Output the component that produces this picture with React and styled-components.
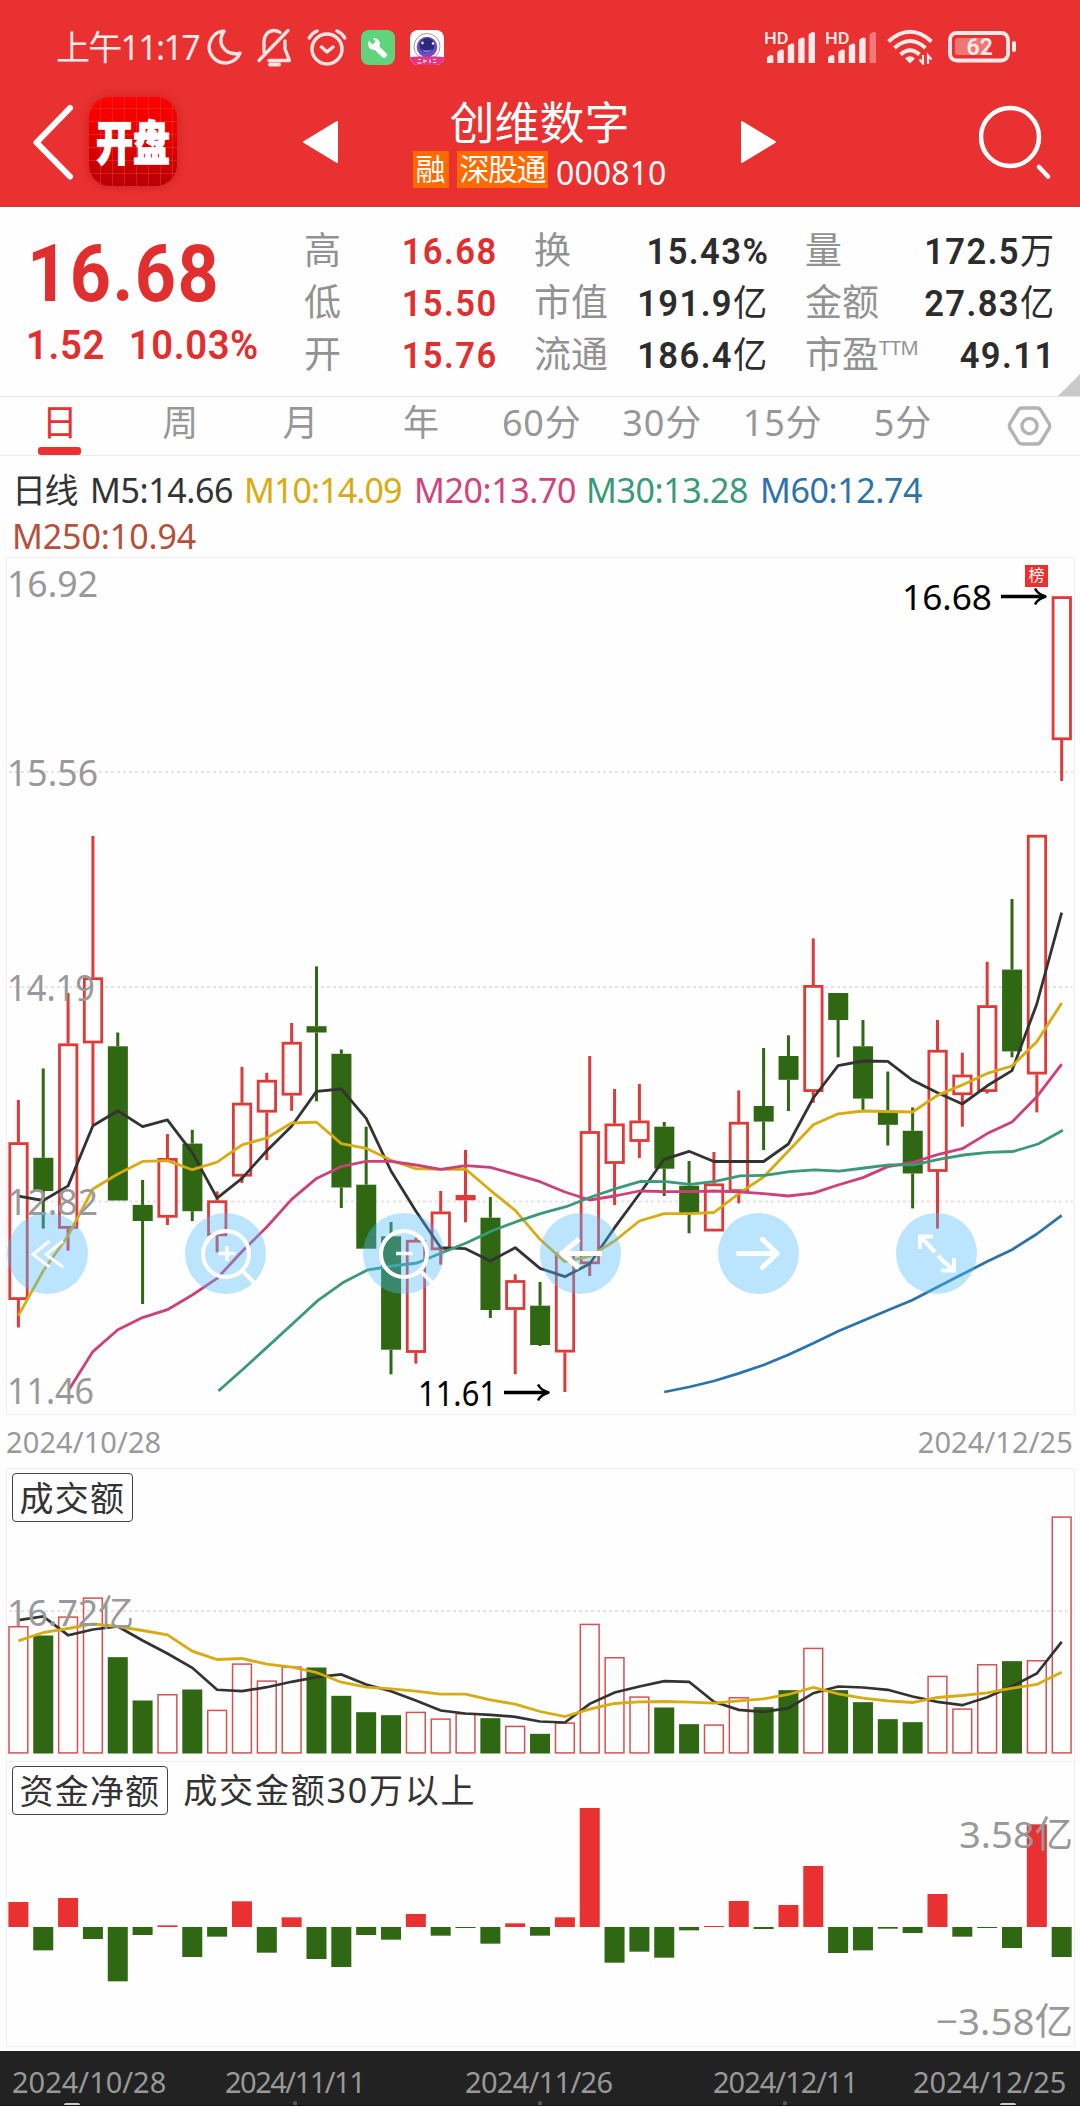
import React from 'react';
import styled, { createGlobalStyle } from 'styled-components';

const RED = '#e83130';
const UP = '#df3a3a';
const DOWN = '#2f6712';
const SANS = '"Noto Sans", "Noto Sans CJK SC", sans-serif';
const DIN = 'Roboto, "Noto Sans CJK SC", sans-serif';

const GlobalStyle = createGlobalStyle`
  * { box-sizing: border-box; }
  body { margin: 0; background: #fff; }
  svg { display: block; flex: none; }
`;

const Screen = styled.div`
  width: 1080px;
  height: 2106px;
  overflow: hidden;
  display: flex;
  flex-direction: column;
  background: #fefefe;
  font-family: ${SANS};
  color: #333;
  white-space: nowrap;
`;

/* ---------- header ---------- */
const Header = styled.header`
  height: 207px;
  flex: none;
  background: ${RED};
  border-bottom: 1px solid #c63c3c;
  color: #fff;
`;

const StatusBar = styled.div`
  height: 94px;
  padding: 0 63px 0 56px;
  display: flex;
  align-items: center;
  justify-content: space-between;
  color: #ffe9e9;
`;

const StatusGroup = styled.div`
  display: flex;
  align-items: center;
  gap: ${(p) => p.$gap}px;
`;

const Clock = styled.span`
  width: 151px;
  font-size: 34px;
  line-height: 40px;
  letter-spacing: -1.7px;
`;

const BatterySlot = styled.span`
  margin-left: 5px;
`;

const NavBar = styled.div`
  height: 96px;
  display: grid;
  grid-template-columns: 89px 214px 438px 238px 1fr;
  align-items: center;
`;

const BackSlot = styled.div`
  padding-left: 30px;
`;

const AppBadge = styled.div`
  width: 88px;
  height: 89px;
  border-radius: 21px;
  margin-top: -1px;
  display: flex;
  align-items: center;
  justify-content: center;
  background:
    repeating-linear-gradient(90deg, transparent 0 11px, rgba(255, 110, 90, 0.28) 11px 12px),
    repeating-linear-gradient(0deg, transparent 0 12px, rgba(255, 110, 90, 0.28) 12px 13px),
    linear-gradient(#ff0000, #f00000 30%, #b80008);
  box-shadow: 0 0 10px rgba(150, 0, 0, 0.35);
  font-family: "Noto Sans CJK SC", sans-serif;
  font-weight: 900;
  font-size: 37px;
  line-height: 40px;
`;

const BadgeText = styled.span`
  display: block;
  transform: translateY(-2px) scaleY(1.26);
  -webkit-text-stroke: 1px #fff;
`;

const StockTitle = styled.div`
  display: grid;
  grid-template-columns: 35px 1fr;
  align-items: center;
`;

const TitleBlock = styled.div`
  margin-top: -2px;
  display: flex;
  flex-direction: column;
  align-items: center;
`;

const StockName = styled.div`
  font-size: 45px;
  line-height: 56px;
  height: 56px;
`;

const StockMeta = styled.div`
  display: flex;
  align-items: center;
  gap: 8px;
  height: 36px;
`;

const Tag = styled.span`
  background: #ff6a00;
  height: 37px;
  line-height: 36px;
  padding: 0 3px;
  font-size: 30px;
  letter-spacing: ${(p) => p.$tight || 0}px;
`;

const Code = styled.span`
  font-size: 32px;
  line-height: 36px;
  padding-top: 7px;
  letter-spacing: 0.1px;
`;

/* ---------- quote ---------- */
const Quote = styled.section`
  position: relative;
  height: 190px;
  flex: none;
  border-bottom: 1px solid #e6e6e6;
  display: flex;
  font-family: ${DIN};
`;

const PriceBlock = styled.div`
  width: 305px;
  padding: 25px 0 0 27px;
  color: #e12f2f;
`;

const Price = styled.div`
  font-weight: 700;
  font-size: 79px;
  line-height: 84px;
  letter-spacing: 1.6px;
  transform: scaleX(0.91);
  transform-origin: 0 0;
`;

const Change = styled.div`
  display: flex;
  gap: 26px;
  margin-top: 8px;
  margin-left: -1px;
  font-weight: 600;
  font-size: 41.5px;
  line-height: 42px;
  letter-spacing: 0.7px;
  transform: scaleX(0.92);
  transform-origin: 0 0;
`;

const Stats = styled.div`
  padding-top: 19px;
  display: grid;
  grid-template-columns: 193px 234px 250px;
  grid-template-rows: repeat(3, 52px);
  column-gap: 37px;
`;

const Stat = styled.div`
  display: flex;
  justify-content: space-between;
  align-items: center;
  font-size: 37px;
  line-height: 52px;
`;

const StatLabel = styled.span`
  color: #929292;
  margin-left: -1px;
  sup { font-size: 20px; line-height: 0; vertical-align: 13px; font-family: ${SANS}; letter-spacing: -0.6px; }
`;

const StatValue = styled.span`
  font-weight: 600;
  color: ${(p) => (p.$up ? '#e12f2f' : '#2c2c2c')};
  letter-spacing: 1.5px;
  transform: scaleX(0.935);
  transform-origin: 100% 0;
`;

const Unit = styled.span`
  font-weight: 400;
  font-size: 36.5px;
`;

const Corner = styled.div`
  position: absolute;
  right: 0;
  bottom: 0;
  border-left: 22px solid transparent;
  border-bottom: 22px solid #c9c9c9;
`;

/* ---------- tabs ---------- */
const Tabs = styled.nav`
  height: 59px;
  flex: none;
  border-bottom: 1px solid #ececec;
  display: grid;
  grid-template-columns: repeat(8, 120.4px) 1fr;
`;

const Tab = styled.div`
  position: relative;
  text-align: center;
  font-size: 36px;
  line-height: 51px;
  color: ${(p) => (p.$active ? RED : '#979797')};
  letter-spacing: 0.8px;
  &::after {
    content: '';
    display: ${(p) => (p.$active ? 'block' : 'none')};
    position: absolute;
    left: 38px;
    bottom: 0;
    width: 43px;
    height: 8px;
    border-radius: 3px;
    background: ${RED};
  }
`;

const GearSlot = styled.div`
  padding: 8px 0 0 44px;
`;

/* ---------- indicators ---------- */
const Averages = styled.div`
  height: 101px;
  flex: none;
  padding: 11px 0 0 12px;
  display: flex;
  flex-wrap: wrap;
  align-content: flex-start;
`;

const Average = styled.span`
  width: ${(p) => p.$w}px;
  color: ${(p) => p.$c};
  font-size: 34px;
  line-height: 46px;
  letter-spacing: ${(p) => p.$ls ?? -0.9}px;
`;

/* ---------- panels ---------- */
const Panel = styled.section`
  position: relative;
  width: 1069px;
  height: ${(p) => p.$h}px;
  margin-left: 6px;
  flex: none;
  border: 1px solid #efefef;
  border-bottom-width: ${(p) => (p.$open ? 0 : 1)}px;
  svg.plot { margin: -1px; }
`;

const DateRow = styled.div`
  height: 53px;
  flex: none;
  padding: 0 7px 0 6px;
  display: flex;
  justify-content: space-between;
  color: #999;
  font-size: 29px;
  line-height: 53px;
  letter-spacing: 0.1px;
`;

const PanelHead = styled.div`
  position: absolute;
  left: 4.5px;
  top: 4px;
  display: flex;
  align-items: center;
  gap: 15px;
  font-size: 34px;
`;

const HeadNote = styled.span`
  line-height: 47px;
  letter-spacing: 1.8px;
`;

const BoxLabel = styled.span`
  height: 49px;
  line-height: 46px;
  padding: 0 7px 0 7px;
  border: 1.5px solid #444;
  border-radius: 4px;
  letter-spacing: 1.2px;
  font-family: "Noto Sans CJK SC", sans-serif;
`;

const Controls = styled.div`
  position: absolute;
  left: 0;
  right: 0;
  top: 655px;
  padding-right: 97px;
  display: flex;
  justify-content: space-between;
`;

const RoundButton = styled.button`
  width: 81px;
  height: 81px;
  padding: 0;
  border: 0;
  border-radius: 50%;
  background: rgba(76, 189, 255, 0.375);
  svg { fill: none; stroke: #fff; }
`;

const HotTag = styled.span`
  position: absolute;
  left: 1018px;
  top: 7px;
  width: 23px;
  height: 22px;
  background: ${RED};
  color: #fff;
  font-size: 16px;
  line-height: 21px;
  text-align: center;
`;

const Footer = styled.footer`
  height: 55px;
  flex: none;
  margin-top: auto;
  background: #222;
  border-bottom: 1px solid #1c0d10;
  color: #999;
  font-size: 29px;
  line-height: 61px;
  display: grid;
  grid-template-columns: 213px 240px 248px 200px 1fr;
  padding-left: 12px;
  position: relative;
`;

const FooterDate = styled.span`
  letter-spacing: ${(p) => p.$ls}px;
`;

const Tick = styled.i`
  position: absolute;
  bottom: 0;
  left: ${(p) => p.$x}px;
  width: ${(p) => (p.$end ? 16 : 4)}px;
  height: ${(p) => (p.$end ? 2 : 4)}px;
  border-radius: 8px 8px 0 0;
  background: ${(p) => (p.$end ? '#ccc' : '#555')};
`;

/* ---------- data ---------- */
// [rising, body top, body bottom, wick top, wick bottom]
const candles = [
  [1, 1141.4, 1298.8, 1099, 1326.5], [0, 1156.8, 1190, 1067.5, 1227.6], [1, 1042.6, 1227.6, 992, 1249.7],
  [1, 976.5, 1042.2, 835, 1124], [0, 1045.3, 1199.5, 1031.5, 1199.5], [0, 1203.9, 1220, 1179, 1303],
  [1, 1157.2, 1216.5, 1133, 1224], [0, 1142.6, 1210.2, 1128.8, 1220], [1, 1199.5, 1235, 1190.4, 1251.3],
  [1, 1101.9, 1175.4, 1065.9, 1182], [1, 1079, 1111.4, 1071.8, 1159.2], [1, 1041, 1094.4, 1022, 1109.8],
  [0, 1025.2, 1031.5, 965.4, 1100.3], [0, 1052.8, 1186.5, 1048.5, 1207], [0, 1183.7, 1247.7, 1125.7, 1247.7],
  [0, 1235.3, 1348.7, 1221, 1373.3], [1, 1239, 1351.7, 1236.7, 1362.7], [1, 1210.7, 1249, 1190, 1263.7],
  [1, 1194, 1199.3, 1149, 1221.3], [0, 1216.7, 1309, 1196, 1317], [1, 1279.3, 1308.7, 1273.3, 1373.3],
  [0, 1304.7, 1344, 1281, 1345], [1, 1251.7, 1351.3, 1251, 1391], [1, 1130.3, 1263, 1055, 1275],
  [1, 1122.7, 1162.7, 1088, 1204], [1, 1119.7, 1140.7, 1083, 1157], [0, 1125.7, 1167.7, 1121, 1195],
  [0, 1184.7, 1212, 1160, 1232.3], [1, 1182.6, 1230.3, 1151, 1230], [1, 1121, 1190.9, 1089.4, 1202.3],
  [0, 1105, 1120.6, 1047, 1149], [0, 1055, 1078.8, 1034.3, 1110], [1, 984.2, 1090.8, 937.4, 1101.8],
  [0, 992, 1019, 992, 1056.3], [0, 1045.3, 1097.6, 1019, 1110], [0, 1111, 1123.8, 1070.6, 1144.5],
  [0, 1129.8, 1172.5, 1106.4, 1207.4], [1, 1049, 1170.7, 1019, 1227.6], [1, 1073.8, 1094, 1051.7, 1125.7],
  [1, 1004.4, 1090.8, 960.8, 1092.6], [0, 968.6, 1050.4, 898, 1056.3], [1, 834, 1073.3, 834, 1111.4],
  [1, 595.4, 739, 595.4, 780],
];

const priceLines = [
  { color: '#333', start: 0, pts: [1195.2, 1199.5, 1184.9, 1124.8, 1109.8, 1125.6, 1118.9, 1151.7, 1197.2, 1177.4, 1149.7, 1125.2, 1090.4, 1088, 1117.3, 1170, 1210, 1246.7, 1247.7, 1260, 1246.7, 1267.3, 1275.7, 1262.7, 1226.7, 1193, 1158.3, 1150.3, 1160.5, 1160.5, 1160.5, 1143, 1097, 1064.6, 1060, 1060.4, 1079.3, 1091.7, 1103, 1084.8, 1069.6, 1003, 911.7] },
  { color: '#d8ab10', start: 0, pts: [1314.6, 1270, 1234.7, 1188, 1173, 1160.4, 1159.6, 1168.7, 1161.2, 1143.8, 1137, 1122, 1121.2, 1142.6, 1147.3, 1159.3, 1167.7, 1168.3, 1168, 1189.3, 1209.3, 1238.3, 1260.7, 1255.3, 1240, 1220, 1212.7, 1212.7, 1211.5, 1192.7, 1176, 1150, 1123.8, 1112.8, 1110, 1110.5, 1111, 1094.4, 1083.9, 1072.4, 1065, 1040.7, 1002] },
  { color: '#cc4179', start: 2, pts: [1390, 1350.6, 1328.8, 1316.6, 1308.7, 1294, 1277.4, 1250.5, 1226, 1198.4, 1177.4, 1165.5, 1160.3, 1160.3, 1164, 1168.3, 1164.7, 1166.3, 1173.3, 1180.7, 1191, 1199, 1195, 1190, 1190.7, 1190.7, 1190, 1190.9, 1192.7, 1195, 1192.2, 1184, 1176.6, 1165.6, 1161.5, 1153.7, 1147.7, 1132.6, 1121, 1095.8, 1063.2] },
  { color: '#3a9979', start: 8.05, pts: [1390, 1368, 1345.4, 1322.5, 1299.6, 1281.8, 1269, 1265, 1262, 1251.7, 1241.7, 1230, 1220.7, 1212.3, 1205.7, 1196, 1187.7, 1180.3, 1180.7, 1183.3, 1180.3, 1174.8, 1174.3, 1170.7, 1168.8, 1170.2, 1167, 1163.8, 1163.8, 1158.3, 1154, 1151.4, 1150.5, 1143, 1129.3] },
  { color: '#2c73aa', start: 26, pts: [1391, 1386, 1380, 1372.3, 1364, 1353.7, 1342.3, 1330.3, 1319.7, 1309.3, 1299, 1286, 1273.3, 1260.6, 1248.7, 1233, 1214.3] },
];

const volumes = [382, 354, 411, 468, 289, 159, 178, 192, 131, 270, 219, 261, 258, 173, 124, 115, 125, 105, 121, 106, 83, 59, 93, 389, 289, 171, 138, 88, 87, 169, 139, 190, 317, 190, 154, 103, 94, 233, 135, 268, 277, 280, 711];
const rising = [1, 0, 1, 1, 0, 0, 1, 0, 1, 1, 1, 1, 0, 0, 0, 0, 1, 1, 1, 0, 1, 0, 1, 1, 1, 1, 0, 0, 1, 1, 0, 0, 1, 0, 0, 0, 0, 1, 1, 1, 0, 1, 1];
const volMa5 = [400, 411, 355, 372, 381, 339, 300, 257, 191, 187, 199, 215, 229, 237, 207, 187, 159, 129, 120, 116, 110, 96, 93, 149, 183, 201, 217, 215, 155, 131, 125, 136, 181, 201, 198, 191, 171, 155, 145, 169, 202, 240, 335];
const volMa10 = [338, 363, 375, 389, 381, 369, 356, 307, 282, 285, 268, 259, 243, 214, 199, 194, 187, 178, 178, 161, 148, 126, 111, 133, 150, 155, 156, 154, 151, 158, 164, 177, 198, 179, 166, 158, 153, 168, 174, 182, 196, 207, 244];
const flows = [75, -70, 87, -36, -163, -24, 5, -90, -29, 77, -77, 29, -96, -120, -24, -38, 39, -26, -3, -50, 11, -26, 29, 357, -107, -74, -92, -10, 3, 78, -6, 66, 183, -78, -70, -5, -18, 99, -29, -2, -63, 308, -90];

const cx = (i) => 18.4 + i * 24.84;
const poly = (pts, start, f) => pts.map((v, i) => `${cx(i + start).toFixed(1)},${f(v).toFixed(1)}`).join(' ');

const Grid = ({ y }) => <line x1="9" x2="1073" y1={y} y2={y} stroke="#e4e4e4" strokeWidth="2" strokeDasharray="3 3" />;

const Label = ({ x, y, w, color = '#999', size = 37, children }) => (
  <text x={x} y={y} fill={color} fontSize={size} fontFamily={SANS} textLength={w} lengthAdjust="spacingAndGlyphs">{children}</text>
);

const Arrow = ({ x, y }) => (
  <g fill="none" stroke="#000">
    <path d={`M${x} ${y}h43`} strokeWidth="3.6" />
    <path d={`M${x + 34} ${y - 8}q3 6 11 8q-8 2-11 8`} strokeWidth="2.6" />
    <path d={`M${x + 38} ${y - 4}l8 4l-8 4z`} fill="#000" stroke="none" />
  </g>
);

function PriceChart() {
  return (
    <svg className="plot" width="1069" height="858" viewBox="6 556 1069 858">
      <Grid y={771} /><Grid y={986} /><Grid y={1200.5} />
      {candles.map(([up, t, b, wt, wb], i) => {
        const x = cx(i);
        const c = up ? UP : DOWN;
        const h = b - t;
        return (
          <g key={i}>
            {wt < t && <line x1={x} x2={x} y1={wt} y2={t} stroke={c} strokeWidth="3" />}
            {wb > b && <line x1={x} x2={x} y1={b} y2={wb} stroke={c} strokeWidth="3" />}
            {up && h > 8
              ? <rect x={x - 8.6} y={t + 1.2} width="17.4" height={h - 2.4} fill="#fefefe" stroke={c} strokeWidth="2.8" />
              : <rect x={x - 9.9} y={t} width="20" height={h} fill={c} />}
          </g>
        );
      })}
      {priceLines.map((l) => (
        <polyline key={l.color} points={poly(l.pts, l.start, (v) => v)} fill="none" stroke={l.color} strokeWidth="2.8" strokeLinejoin="round" />
      ))}
      <Label x={7} y={596} w={91}>16.92</Label>
      <Label x={7} y={785} w={91}>15.56</Label>
      <Label x={7} y={999.5} w={88}>14.19</Label>
      <Label x={7} y={1214} w={91}>12.82</Label>
      <Label x={7} y={1403} w={87}>11.46</Label>
      <Label x={902} y={608.5} w={90} color="#000" size={35}>16.68</Label>
      <Arrow x={1001} y={595.5} />
      <Label x={418} y={1404.5} w={79} color="#000" size={35}>11.61</Label>
      <Arrow x={504} y={1391.5} />
    </svg>
  );
}

function VolumeChart() {
  const base = 1752.5;
  const f = (v) => base - v / 3;
  return (
    <svg className="plot" width="1069" height="293" viewBox="6 1467 1069 293">
      <Grid y={1610} />
      {volumes.map((v, i) => (rising[i]
        ? <rect key={i} x={cx(i) - 9.4} y={f(v) + 0.6} width="18.8" height={v / 3 - 1.2} fill="none" stroke="#d65252" strokeWidth="1.5" />
        : <rect key={i} x={cx(i) - 10} y={f(v)} width="20" height={v / 3} fill={DOWN} />))}
      <polyline points={poly(volMa5, 0, f)} fill="none" stroke="#333" strokeWidth="2.7" />
      <polyline points={poly(volMa10, 0, f)} fill="none" stroke="#d8ab10" strokeWidth="2.8" />
      <Label x={7} y={1625} w={127} size={36}>16.72亿</Label>
    </svg>
  );
}

function FlowChart() {
  return (
    <svg className="plot" width="1069" height="286" viewBox="6 1760 1069 286">
      {flows.map((v, i) => (
        <rect key={i} x={cx(i) - 10} y={v > 0 ? 1926 - v / 3 : 1926} width="20" height={Math.max(1, Math.abs(v) / 3)} fill={v > 0 ? RED : DOWN} />
      ))}
      <Label x={959} y={1846.5} w={114} size={37}>3.58亿</Label>
      <Label x={936} y={2033.5} w={137} size={37}>−3.58亿</Label>
    </svg>
  );
}

/* ---------- icons ---------- */
const Moon = () => (
  <svg width="35" height="36" viewBox="0 0 35 36" fill="none" stroke="#ffe3e3" strokeWidth="3.4" strokeLinejoin="round">
    <path d="M15.5 2.2A16 16 0 1 0 33 24.200C21.500 27 13 19 14 9.500Q14.300 5.300 17 2.300Z" />
  </svg>
);
const BellOff = () => (
  <svg width="36" height="39" viewBox="0 0 36 39" fill="none" stroke="#ffe3e3" strokeWidth="3.3" strokeLinecap="round" strokeLinejoin="round">
    <path d="M8 24V14C8 7 12.500 2.500 18 2.500Q21.500 2.500 24 4.500M29 13V21L33.500 32.500H13M32 2.500L3 32.500" />
    <path d="M14 36.500h9" strokeWidth="4" />
  </svg>
);
const Alarm = () => (
  <svg width="40" height="37" viewBox="0 0 40 37" fill="none" stroke="#ffe3e3" strokeWidth="3.5" strokeLinecap="round" strokeLinejoin="round">
    <circle cx="20" cy="20" r="15" />
    <path d="M14.500 18l5.500 5 6-5M2.300 9Q5 4 10 2M37.700 9Q35 4 30 2" />
  </svg>
);
const ToolApp = () => (
  <svg width="34" height="35" viewBox="0 0 34 35">
    <rect width="34" height="35" rx="8" fill="#5fd47d" />
    <path d="M14.500 16.500L23 25" stroke="#fff" strokeWidth="5.600" strokeLinecap="round" />
    <circle cx="13" cy="14" r="6" fill="#fff" />
    <path d="M7 6l6 7" stroke="#5fd47d" strokeWidth="4.500" />
  </svg>
);
const CameraApp = () => (
  <svg width="34" height="35" viewBox="0 0 34 35">
    <clipPath id="cam"><rect width="34" height="35" rx="8" /></clipPath>
    <g clipPath="url(#cam)">
      <rect width="34" height="35" fill="#fff" />
      <circle cx="17" cy="16.500" r="13" fill="none" stroke="#999" />
      <circle cx="17" cy="17" r="10.300" fill="#6a50c4" />
      <circle cx="17" cy="15.500" r="7.500" fill="#2c2a78" />
      <path d="M11 19Q17 26 23 19Q17 22 11 19Z" fill="#8f7be8" />
      <circle cx="12.500" cy="13" r="1.400" fill="#cdd4ff" /><circle cx="23" cy="13.500" r="1.200" fill="#fff" />
      <path d="M0 27Q17 25.500 34 27V35H0Z" fill="#e93486" />
      <path d="M8 29.500h3m-3.500 3.500h4M14 29.500v3.500m0-2h3M20 29.500v3.500M23 29.500h3m-3 3h3" stroke="#fff" strokeWidth="1.200" />
    </g>
  </svg>
);
const Signal = ({ weak }) => (
  <svg width="51" height="34" viewBox="0 0 51 34" fill="#ffe9e9">
    <text x="-1" y="13.500" fontSize="16.500" fontWeight="500" fontFamily="Roboto, sans-serif" textLength="24.500" lengthAdjust="spacingAndGlyphs">HD</text>
    {[25, 19.500, 13.500, 7.500, 2].map((y, i) => (
      <path key={i} d={`M${2 + i * 10.400} 33V${y + 3}q0-1.500 4-3q2.400-.5 2.400 1.500V33z`} opacity={weak && i === 4 ? 0.4 : 1} />
    ))}
  </svg>
);
const Wifi = () => (
  <svg width="46" height="36" viewBox="0 0 46 36" fill="none" stroke="#ffe9e9" strokeWidth="4">
    <path d="M1.500 12.500Q23-7 44.500 12.500" /><path d="M7.500 19Q23 5 38.500 19" /><path d="M13.500 25.500Q23 17 32.500 25.500" />
    <path d="M18 29.500Q23 25 28 29.500L23 34.500Z" fill="#ffe9e9" stroke="none" />
    <path d="M36 26v8.500l-3.500-4M41 35v-8.500l3.500 4" strokeWidth="2.200" />
  </svg>
);
const Battery = () => (
  <svg width="69" height="32" viewBox="0 0 69 32">
    <rect x="2" y="2" width="58" height="27.500" rx="6.500" fill="none" stroke="#ffe9e9" strokeWidth="3.800" />
    <rect x="7" y="7" width="33" height="17" rx="3" fill="#f07675" />
    <rect x="64" y="10" width="4" height="11" rx="2" fill="#ffe9e9" />
    <text x="18.500" y="24" fontSize="23" fontWeight="600" fontFamily="Roboto, sans-serif" fill="#ffeaea">62</text>
  </svg>
);
const Back = () => (
  <svg width="48" height="80" viewBox="0 0 48 80" fill="none" stroke="#fff" strokeWidth="6" strokeLinecap="round" strokeLinejoin="round">
    <path d="M40 6L6.500 40.500L40 74.500" />
  </svg>
);
const Tri = ({ flip }) => (
  <svg width="35" height="42" viewBox="0 0 35 42" fill="#fff" stroke="#fff" strokeWidth="2" strokeLinejoin="round">
    <path d={flip ? 'M1 1L34 21L1 41Z' : 'M34 1L1 21L34 41Z'} />
  </svg>
);
const Search = () => (
  <svg width="73" height="76" viewBox="0 0 73 76" fill="none" stroke="#fff" strokeWidth="4.500" strokeLinecap="round">
    <circle cx="31" cy="33" r="29" /><path d="M60 63L69 72.500" />
  </svg>
);
const Gear = () => (
  <svg width="45" height="42" viewBox="0 0 45 42" fill="none" stroke="#b3b3b3" strokeWidth="3.400" strokeLinejoin="round">
    <path d="M15 3H30Q32.500 3 34 5.500L42 18.500Q43.300 21 42 23.500L34 36.500Q32.500 39 30 39H15Q12.500 39 11 36.500L3 23.500Q1.700 21 3 18.500L11 5.500Q12.500 3 15 3Z" />
    <circle cx="22.500" cy="21" r="7.600" />
  </svg>
);

const controls = [
  <g strokeWidth="3"><path d="M42.500 28L26 41.500L42.500 54M56 28L39 41.500L56 54" /></g>,
  <g strokeWidth="4"><circle cx="41" cy="41" r="23" /><path d="M33.500 40.500h17M42 33v15" strokeWidth="3.500" /><path d="M57.500 58L69 69.500" /></g>,
  <g strokeWidth="4"><circle cx="41" cy="41" r="23" /><path d="M33 40.500h17" strokeWidth="3.500" /><path d="M57.500 58L69 69.500" /></g>,
  <g strokeWidth="5"><path d="M62 40.500H22M39 26L22 40.500L39 55" /></g>,
  <g strokeWidth="5" strokeLinecap="round" strokeLinejoin="round"><path d="M20.500 40.500H58M44.500 26.500L59 40.500L44.500 54.500" /></g>,
  <g strokeWidth="4"><path d="M39 39L25 24.500M24 36V23.500H37M42 43L57 57M58 45V57.500H45" /></g>,
];

const averages = [
  ['M5:14.66', '#333', 154, -0.4], ['M10:14.09', '#d8ab10', 170, -0.9], ['M20:13.70', '#cf447c', 172, -0.4],
  ['M30:13.28', '#3a9979', 174, -0.4], ['M60:12.74', '#2c73aa', 190, -0.4], ['M250:10.94', '#b5503a', 300, -0.1],
];

const stats = [
  ['高', '16.68', '', 1], ['换', '15.43%', ''], ['量', '172.5', '万'],
  ['低', '15.50', '', 1], ['市值', '191.9', '亿'], ['金额', '27.83', '亿'],
  ['开', '15.76', '', 1], ['流通', '186.4', '亿'], ['市盈', '49.11', ''],
];

const footerDates = [
  ['2024/10/28', 0], ['2024/11/11', -1.5], ['2024/11/26', -0.7], ['2024/12/11', -1], ['2024/12/25', -0.1],
];

export default function App() {
  return (
    <Screen lang="zh-CN">
      <GlobalStyle />
      <Header>
        <StatusBar>
          <StatusGroup $gap={0}>
            <Clock>上午11:17</Clock>
            <StatusGroup $gap={14.4}>
              <Moon /><BellOff /><Alarm /><ToolApp /><CameraApp />
            </StatusGroup>
          </StatusGroup>
          <StatusGroup $gap={10}>
            <Signal /><Signal weak /><Wifi /><BatterySlot><Battery /></BatterySlot>
          </StatusGroup>
        </StatusBar>
        <NavBar>
          <BackSlot><Back /></BackSlot>
          <AppBadge><BadgeText>开盘</BadgeText></AppBadge>
          <StockTitle>
            <Tri />
            <TitleBlock>
              <StockName>创维数字</StockName>
              <StockMeta><Tag>融</Tag><Tag $tight={-1.5}>深股通</Tag><Code>000810</Code></StockMeta>
            </TitleBlock>
          </StockTitle>
          <Tri flip />
          <Search />
        </NavBar>
      </Header>

      <Quote>
        <PriceBlock>
          <Price>16.68</Price>
          <Change><span>1.52</span><span>10.03%</span></Change>
        </PriceBlock>
        <Stats>
          {stats.map(([label, value, unit, up]) => (
            <Stat key={label}>
              <StatLabel>{label}{label === '市盈' && <sup>TTM</sup>}</StatLabel>
              <StatValue $up={up}>{value}{unit && <Unit>{unit}</Unit>}</StatValue>
            </Stat>
          ))}
        </Stats>
        <Corner />
      </Quote>

      <Tabs>
        {['日', '周', '月', '年', '60分', '30分', '15分', '5分'].map((t, i) => <Tab key={t} $active={i === 0}>{t}</Tab>)}
        <GearSlot><Gear /></GearSlot>
      </Tabs>

      <Averages>
        <Average $c="#333" $w={78} $ls={-1.5}>日线</Average>
        {averages.map(([t, c, w, ls]) => <Average key={t} $c={c} $w={w} $ls={ls}>{t}</Average>)}
      </Averages>

      <Panel $h={858}>
        <PriceChart />
        <HotTag>榜</HotTag>
        <Controls>
          {controls.map((icon, i) => (
            <RoundButton key={i}><svg width="81" height="81" viewBox="0 0 81 81">{icon}</svg></RoundButton>
          ))}
        </Controls>
      </Panel>
      <DateRow><span>2024/10/28</span><span>2024/12/25</span></DateRow>
      <Panel $h={293} $open>
        <VolumeChart />
        <PanelHead><BoxLabel>成交额</BoxLabel></PanelHead>
      </Panel>
      <Panel $h={286}>
        <FlowChart />
        <PanelHead><BoxLabel>资金净额</BoxLabel><HeadNote>成交金额30万以上</HeadNote></PanelHead>
      </Panel>

      <Footer>
        {footerDates.map(([d, ls]) => <FooterDate key={d} $ls={ls}>{d}</FooterDate>)}
        <Tick $x={64} $end /><Tick $x={293} /><Tick $x={538} /><Tick $x={783} /><Tick $x={1000} $end />
      </Footer>
    </Screen>
  );
}
